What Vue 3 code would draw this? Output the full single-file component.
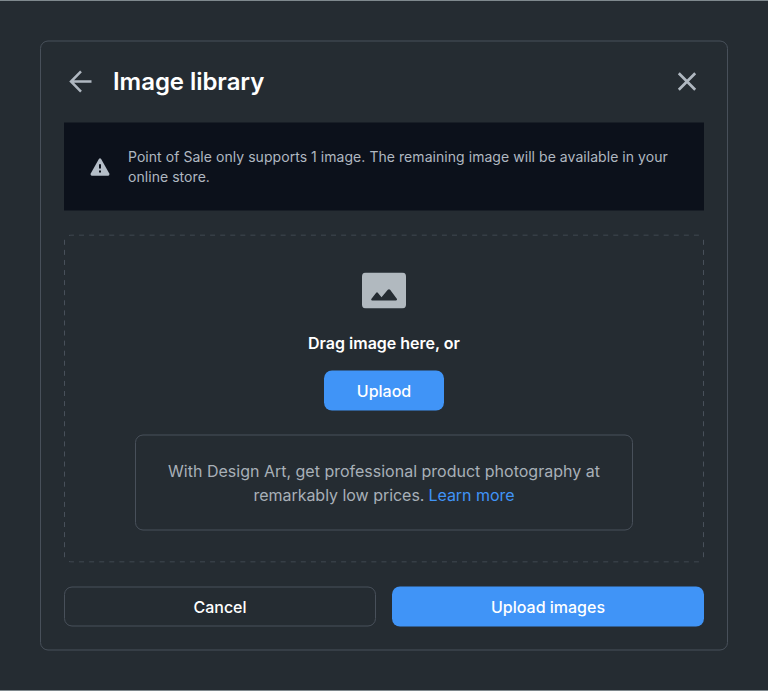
<script setup>
const notice = 'Point of Sale only supports 1 image. The remaining image will be available in your online store.'
</script>

<template>
  <main class="page">
    <section class="card">
      <header class="head">
        <svg class="back" width="24" height="24" viewBox="0 0 24 24" fill="none" stroke="#b0b8c1" stroke-width="2.5">
          <path d="M22.5 12H2.5M12 1.9 2 12 12 22.1" />
        </svg>
        <h1>Image library</h1>
        <svg class="close" width="24" height="24" viewBox="0 0 24 24" fill="none" stroke="#b0b8c1" stroke-width="2.7">
          <path d="M3.8 3.8 20.2 20.2M20.2 3.8 3.8 20.2" />
        </svg>
      </header>

      <div class="notice">
        <svg width="24" height="24" viewBox="0 0 24 24">
          <path fill="#b5bec8" d="M10.9 4.6Q12 3.1 13.1 4.6L21.3 19.1Q22 21.2 20.3 21.3H3.7Q2 21.2 2.7 19.1Z" />
          <path fill="#0c111b" d="M11 9.7h2v4.4h-2zM11 15.9h2v2.2h-2z" />
        </svg>
        <p>{{ notice }}</p>
      </div>

      <div class="drop">
        <svg class="dashes" width="640" height="328" fill="none" stroke="#48505a" stroke-dasharray="5 5.08">
          <path d="M5 .9Q6 .5 8 .5H635" />
          <path d="M5 327.1Q6 327.5 8 327.5H635" />
          <path d="M.5 5.3V322.7" />
          <path d="M639.5 5.3V322.7" />
        </svg>
        <svg class="picture" width="44" height="36" viewBox="0 0 44 36">
          <rect width="44" height="36" rx="4" fill="#b1b9bf" />
          <path fill="#252c32" d="M9.3 26.6 14 20.4Q15 19.2 16 20.4L19.5 24.8 25.8 17.3Q27 16 28.1 17.3L35 26.6Q35.3 28 34 28H10Q8.8 28 9.3 26.6Z" />
        </svg>
        <p class="drag">Drag image here, or</p>
        <button class="primary small">Uplaod</button>
        <div class="promo">
          <p>With Design Art, get professional product photography at</p>
          <div class="line">
            <span>remarkably low prices.</span>
            <a>Learn more</a>
          </div>
        </div>
      </div>

      <footer class="actions">
        <button class="secondary">Cancel</button>
        <button class="primary">Upload images</button>
      </footer>
    </section>
  </main>
</template>

<style>
body { background: #252c32; }
</style>

<style scoped>
* { box-sizing: border-box; }
h1, p { margin: 0; }
.page {
  height: 691px;
  padding: 39px 40px;
  border-top: 1px solid #7f898e;
  border-bottom: 1px solid #7f898e;
  background: #252c32;
  font-family: Inter, sans-serif;
  color: #fff;
}
.card {
  height: 610px;
  padding: 0 23px 23px;
  border: 1px solid #48505a;
  border-radius: 8px;
  transform: translateY(.5px);
}
.head {
  display: flex;
  align-items: center;
  height: 81px;
  padding: 0 5px 1px;
}
.back { margin-right: 20px; }
h1 {
  flex: 1;
  font-size: 24px;
  line-height: 32px;
  font-weight: 600;
  letter-spacing: -.05px;
}
.notice {
  display: flex;
  align-items: center;
  gap: 16px;
  height: 88px;
  padding: 0 24px;
  background: #0c111b;
}
.notice svg { flex: none; }
.notice p {
  font-size: 14px;
  line-height: 20px;
  letter-spacing: .05px;
  color: #b0b8c1;
}
.drop {
  position: relative;
  display: flex;
  flex-direction: column;
  align-items: center;
  height: 328px;
  margin: 24px 0;
  padding-top: 38px;
}
.dashes { position: absolute; inset: 0; }
.drag {
  margin: 22px 0 16px;
  font-size: 16px;
  line-height: 24px;
  font-weight: 600;
}
.promo {
  width: 498px;
  height: 96px;
  margin-top: 24px;
  padding: 23px 30px;
  border: 1px solid #48505a;
  border-radius: 8px;
  font-size: 16px;
  line-height: 24px;
  text-align: center;
  color: #a8b0b8;
}
.line {
  display: flex;
  justify-content: center;
  gap: 4px;
  letter-spacing: -.03px;
}
.line a { color: #4094f7; }
.actions { display: flex; gap: 16px; }
button {
  flex: none;
  width: 312px;
  height: 40px;
  padding: 0;
  border: 0;
  border-radius: 8px;
  font: 500 16px/24px Inter, sans-serif;
  color: #fff;
}
.primary { background: #4094f7; }
.secondary { background: transparent; border: 1px solid #48505a; }
.small { width: 120px; }
</style>
